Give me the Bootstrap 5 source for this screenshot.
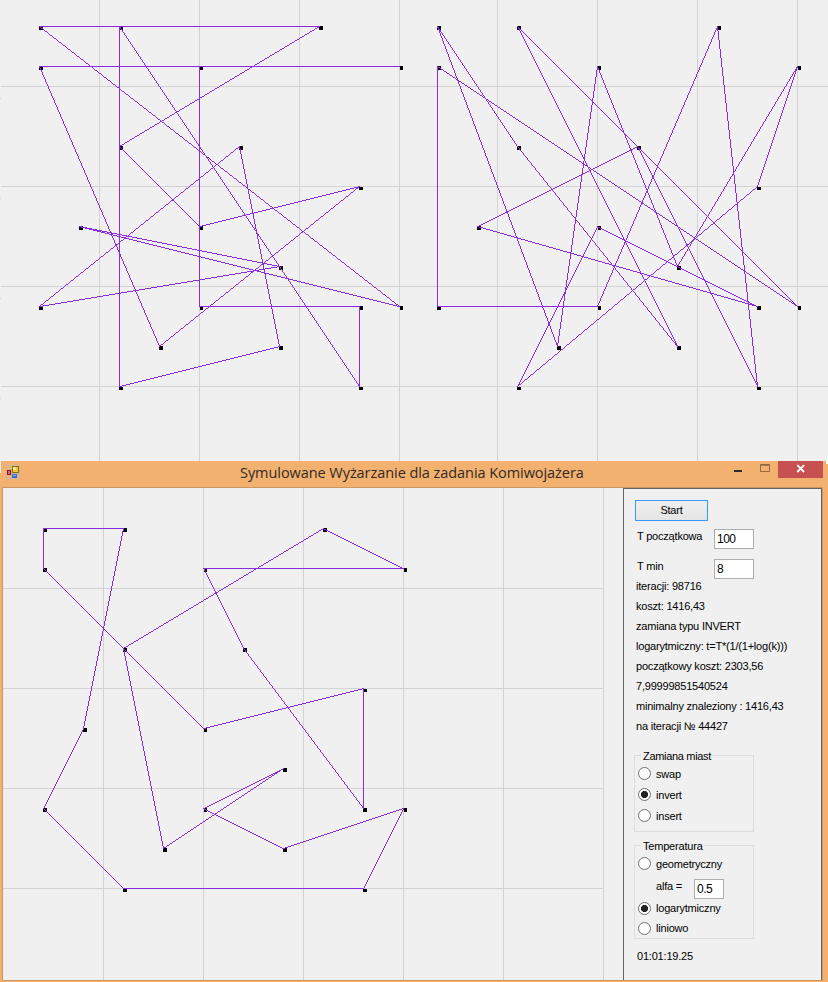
<!DOCTYPE html>
<html lang="pl">
<head>
<meta charset="utf-8">
<title>Symulowane Wyżarzanie dla zadania Komiwojażera</title>
<meta name="viewport" content="width=device-width, initial-scale=1">
<link href="https://cdn.jsdelivr.net/npm/bootstrap@5.3.0/dist/css/bootstrap.min.css" rel="stylesheet">
<style>
  body { width: 828px; height: 982px; background: #f0f0f0; font: 11px/20px "Liberation Sans", Arial, sans-serif; color: #000; letter-spacing: -.2px; }
  .plot { shape-rendering: crispEdges; flex: none; }
  .grid-lines { stroke: #d3d3d3; fill: none; }
  .tour { fill: #8a2be2; }
  .desk { height: 461px; }
  .app-window { height: 521px; background: linear-gradient(#f0f0f0, #f0f0f0) 0 0 / 1px 12px no-repeat, linear-gradient(#fff, #fff) 826px 0 / 2px 3px no-repeat, #f3b170; padding: 0 5px 1px 2px; }
  .title-row { height: 26px; }
  .app-icon { margin: 4px 0 0 4px; }
  .app-title { font: 14.5px/24px "Open Sans", sans-serif; color: #302a25; letter-spacing: -.06px; margin-left: 218px; width: 344px; white-space: nowrap; }
  .window-buttons { margin-left: auto; width: 89px; height: 17px; }
  .client { height: 494px; border: 1px solid #cf9660; background: #f0f0f0; }
  .side { width: 199px; height: 492px; border: 1px solid #646464; border-bottom: 0; padding: 11px 0 0 11px; }
  .start-btn { width: 73px; height: 21px; border: 1px solid #3399ff; border-radius: 0; background: linear-gradient(#f0f0f0, #e5e5e5); font-size: 11px; line-height: 19px; padding: 0; letter-spacing: -.2px; color: #000; }
  .first-field { margin-top: 5px; }
  .field-row { height: 30px; padding-left: 2px; }
  .field-label { width: 77px; height: 20px; line-height: 20px; white-space: nowrap; }
  .num { height: 20px; border: 1px solid #abadb3; border-radius: 0; background: #fff; font-size: 12px; line-height: 18px; padding: 0 0 0 2px; letter-spacing: -.5px; color: #000; margin-top: 3px; }
  .num-wide { width: 40px; }
  .num-narrow { width: 30px; }
  .stats { padding-left: 1px; margin-top: -10px; white-space: nowrap; }
  .group { width: 120px; border: 1px solid #dcdcdc; margin-left: -1px; padding-left: 3px; }
  .group-swap { height: 77px; margin-top: 19px; }
  .group-temp { height: 94px; margin-top: 13px; }
  .group-title { display: block; width: 70px; height: 14px; line-height: 14px; margin: -7px 0 0 3px; padding-left: 2px; background: #f0f0f0; white-space: nowrap; letter-spacing: -.32px; }
  .group-temp .group-title { width: 63px; letter-spacing: -.2px; }
  .choice { height: 21px; gap: 5px; }
  .choice-tight { height: 20px; }
  .choice .form-check-input { width: 13px; height: 13px; border: 1px solid #707070; margin: 0; background: #fff; float: none; }
  .choice .form-check-input:checked { background: radial-gradient(circle, #222 0 3.2px, #fff 3.9px); border-color: #707070; }
  .alfa-row { height: 24px; padding: 2px 0 0 18px; }
  .alfa-row label { width: 38px; }
  .clock { padding-left: 2px; margin-top: 7px; }
</style>
</head>
<body class="d-flex flex-column overflow-hidden m-0">
  <svg class="plot desk" width="828" height="461" viewBox="0 0 828 461">
    <path class="grid-lines" d="M1 86.5H828M1 186.5H828M1 286.5H828M1 386.5H828M99.5 0V461M199.5 0V461M299.5 0V461M399.5 0V461M497.5 0V461M597.5 0V461M697.5 0V461M797.5 0V461M0 98.5h1M0 198.5h1M0 298.5h1M0 398.5h1"/>
    <g data-x="39" data-y="26" data-tour="0,0 7,0 2,3 4,5 8,4 3,8 0,1 9,1 4,1 4,7 8,7 8,9 2,0 2,9 6,8 5,3 0,7 6,6 1,5 9,7"></g>
    <g data-x="437" data-y="26" data-tour="0,1 0,7 4,7 7,0 8,9 5,3 1,5 8,7 4,5 2,9 8,4 9,1 6,6 4,1 3,8 0,0 2,3 6,8 2,0 9,7"></g>
  </svg>

  <main class="app-window">
    <header class="title-row d-flex align-items-start">
      <svg class="app-icon" width="16" height="16" viewBox="0 0 16 16" shape-rendering="crispEdges">
        <path d="M.5 .5h13v13H.5z" fill="none" stroke="#c4b9a8"/>
        <path d="M5.5 0v14M6 8.500h8" stroke="#c4b9a8"/>
        <path fill="#8c1616" d="M1 5h4v5H1z"/><path fill="#e06a5c" d="M2 6h2v3H2z"/>
        <path fill="#8f6a0c" d="M6 1h7v7H6z"/><path fill="#f5c62c" d="M7 2h5v5H7z"/><path fill="#fde885" d="M7 2h3v3H7z"/>
        <path fill="#3a6fd0" d="M6 9h5v4H6z"/><path fill="#80aef5" d="M7 10h3v1H7z"/>
      </svg>
      <div class="app-title">Symulowane Wyżarzanie dla zadania Komiwojażera</div>
      <svg class="window-buttons" viewBox="0 0 89 17">
        <path fill="#2b2b2b" d="M0 9h8v2H0z"/>
        <path fill="none" stroke="#936b42" d="M26.500 3.500h9v7h-9z"/><path stroke="#936b42" d="M26 4.300h10"/>
        <path fill="#c75050" d="M44 0h45v17H44z"/>
        <path stroke="#fff" stroke-width="1.900" d="M63.300 4.200l6.800 6.800M70.100 4.200l-6.800 6.800"/>
      </svg>
    </header>
    <div class="client d-flex">
      <svg class="plot me-auto" width="620" height="492" viewBox="3 488 620 492">
        <path class="grid-lines" d="M3 588.5H603M3 688.5H603M3 788.5H603M3 888.5H603M103.500 488V980M203.500 488V980M303.500 488V980M403.500 488V980M503.500 488V980M603.500 488V980"/>
        <g data-x="43" data-y="528" data-tour="0,0 2,0 1,5 0,7 2,9 8,9 9,7 6,8 4,7 6,6 3,8 2,3 7,0 9,1 4,1 5,3 8,7 8,4 4,5 0,1"></g>
      </svg>
      <aside class="side flex-shrink-0">
        <button class="start-btn btn d-block" type="button">Start</button>
        <div class="field-row first-field d-flex"><label class="field-label" for="t0">T początkowa</label><input class="num num-wide" id="t0" value="100"></div>
        <div class="field-row d-flex"><label class="field-label" for="tmin">T min</label><input class="num num-wide" id="tmin" value="8"></div>
        <div class="stats">
          <div>iteracji: 98716</div>
          <div>koszt: 1416,43</div>
          <div>zamiana typu INVERT</div>
          <div>logarytmiczny: t=T*(1/(1+log(k)))</div>
          <div>początkowy koszt: 2303,56</div>
          <div>7,99999851540524</div>
          <div>minimalny znaleziony : 1416,43</div>
          <div>na iteracji № 44427</div>
        </div>
        <section class="group group-swap">
          <span class="group-title">Zamiana miast</span>
          <label class="choice d-flex align-items-center"><input class="form-check-input" type="radio" name="move">swap</label>
          <label class="choice d-flex align-items-center"><input class="form-check-input" type="radio" name="move" checked>invert</label>
          <label class="choice d-flex align-items-center"><input class="form-check-input" type="radio" name="move">insert</label>
        </section>
        <section class="group group-temp">
          <span class="group-title">Temperatura</span>
          <label class="choice d-flex align-items-center"><input class="form-check-input" type="radio" name="temp">geometryczny</label>
          <div class="alfa-row d-flex"><label for="alfa">alfa =</label><input class="num num-narrow" id="alfa" value="0.5"></div>
          <label class="choice choice-tight d-flex align-items-center"><input class="form-check-input" type="radio" name="temp" checked>logarytmiczny</label>
          <label class="choice choice-tight d-flex align-items-center"><input class="form-check-input" type="radio" name="temp">liniowo</label>
        </section>
        <div class="clock">01:01:19.25</div>
      </aside>
    </div>
  </main>
<script src="https://cdn.jsdelivr.net/npm/bootstrap@5.3.0/dist/js/bootstrap.bundle.min.js"></script>
<script>
  // One-pixel aliased segment: a single pixel per step along the longer axis.
  function segment([x1, y1], [x2, y2]) {
    const steps = Math.max(Math.abs(x2 - x1), Math.abs(y2 - y1));
    let d = '';
    for (let k = 0; k <= steps; k++) {
      const x = Math.round(x1 + (x2 - x1) * k / steps), y = Math.round(y1 + (y2 - y1) * k / steps);
      d += `M${x} ${y}h1v1h-1z`;
    }
    return d;
  }

  // Cities sit on a 40px lattice; each group lists the visiting order of its tour.
  document.querySelectorAll('[data-tour]').forEach(g => {
    const x0 = +g.dataset.x, y0 = +g.dataset.y;
    const cities = g.dataset.tour.split(' ').map(p => p.split(',').map(Number));
    const points = cities.map(([i, j]) => [x0 + 40 * i, y0 + 40 * j]);
    const tour = points.map((p, n) => segment(p, points[(n + 1) % points.length])).join('');
    const dots = cities.map(([i, j]) => {
      const dx = i % 5 === 4 ? 1 : 0, dy = j % 5 === 4 ? 1 : 0;
      return `M${x0 + 40 * i + dx} ${y0 + 40 * j + dy}h${4 - dx}v${4 - dy}h${dx - 4}z`;
    }).join('');
    g.innerHTML = `<path d="${dots}"/><path class="tour" d="${tour}"/>`;
  });
</script>
</body>
</html>
